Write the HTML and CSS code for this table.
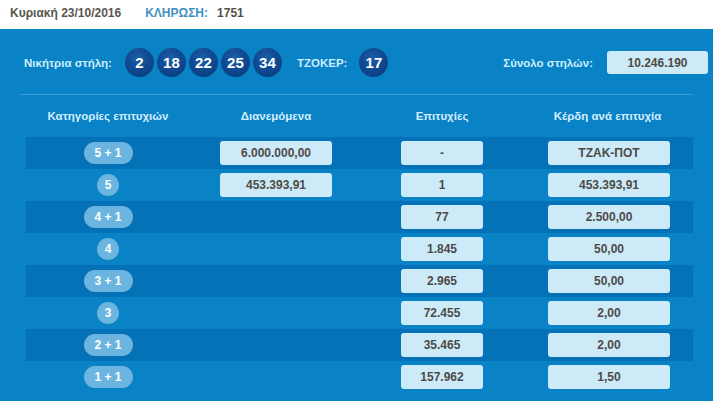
FILE: index.html
```html
<!DOCTYPE html>
<html lang="el">
<head>
<meta charset="utf-8">
<title>ΤΖΟΚΕΡ κλήρωση 1751</title>
<link rel="stylesheet" href="styles.css">
</head>
<body>
<div class="topbar">
  <span class="date">Κυριακή 23/10/2016</span>
  <span class="draw-label">ΚΛΗΡΩΣΗ:</span>
  <span class="draw-no">1751</span>
</div>
<div class="panel">
  <div class="numbers">
    <span class="lbl lbl-win">Νικήτρια στήλη:</span>
    <div class="balls">
      <span class="ball">2</span>
      <span class="ball">18</span>
      <span class="ball">22</span>
      <span class="ball">25</span>
      <span class="ball">34</span>
    </div>
    <span class="lbl lbl-joker">ΤΖΟΚΕΡ:</span>
    <span class="ball">17</span>
    <span class="lbl lbl-total">Σύνολο στηλών:</span>
    <span class="total-box">10.246.190</span>
  </div>
  <div class="table">
    <div class="row head">
      <div class="cell">Κατηγορίες επιτυχιών</div>
      <div class="cell">Διανεμόμενα</div>
      <div class="cell">Επιτυχίες</div>
      <div class="cell">Κέρδη ανά επιτυχία</div>
    </div>
    <div class="row dark">
      <div class="cell"><span class="pill">5 + 1</span></div>
      <div class="cell"><span class="box box-dist">6.000.000,00</span></div>
      <div class="cell"><span class="box box-succ">-</span></div>
      <div class="cell"><span class="box box-win">ΤΖΑΚ-ΠΟΤ</span></div>
    </div>
    <div class="row">
      <div class="cell"><span class="pill round">5</span></div>
      <div class="cell"><span class="box box-dist">453.393,91</span></div>
      <div class="cell"><span class="box box-succ">1</span></div>
      <div class="cell"><span class="box box-win">453.393,91</span></div>
    </div>
    <div class="row dark">
      <div class="cell"><span class="pill">4 + 1</span></div>
      <div class="cell"></div>
      <div class="cell"><span class="box box-succ">77</span></div>
      <div class="cell"><span class="box box-win">2.500,00</span></div>
    </div>
    <div class="row">
      <div class="cell"><span class="pill round">4</span></div>
      <div class="cell"></div>
      <div class="cell"><span class="box box-succ">1.845</span></div>
      <div class="cell"><span class="box box-win">50,00</span></div>
    </div>
    <div class="row dark">
      <div class="cell"><span class="pill">3 + 1</span></div>
      <div class="cell"></div>
      <div class="cell"><span class="box box-succ">2.965</span></div>
      <div class="cell"><span class="box box-win">50,00</span></div>
    </div>
    <div class="row">
      <div class="cell"><span class="pill round">3</span></div>
      <div class="cell"></div>
      <div class="cell"><span class="box box-succ">72.455</span></div>
      <div class="cell"><span class="box box-win">2,00</span></div>
    </div>
    <div class="row dark">
      <div class="cell"><span class="pill">2 + 1</span></div>
      <div class="cell"></div>
      <div class="cell"><span class="box box-succ">35.465</span></div>
      <div class="cell"><span class="box box-win">2,00</span></div>
    </div>
    <div class="row">
      <div class="cell"><span class="pill">1 + 1</span></div>
      <div class="cell"></div>
      <div class="cell"><span class="box box-succ">157.962</span></div>
      <div class="cell"><span class="box box-win">1,50</span></div>
    </div>
  </div>
</div>
</body>
</html>
```
FILE: styles.css
```css
html, body {
  margin: 0;
  padding: 0;
  background: #0a82c6;
  font-family: "Liberation Sans", Arial, sans-serif;
  font-size: 12px;
  font-weight: bold;
}
.topbar {
  background: #ffffff;
  height: 29px;
  display: flex;
  align-items: center;
  padding-left: 10px;
  padding-bottom: 4px;
  box-sizing: border-box;
  font-size: 12px;
}
.date {
  color: #5a5650;
}
.draw-label {
  color: #3f90c2;
  margin-left: 24px;
}
.draw-no {
  color: #555049;
  margin-left: 9px;
}
.panel {
  background: #0a82c6;
  height: 372px;
}
.numbers {
  height: 65px;
  box-sizing: border-box;
  padding: 2px 5px 0 24px;
  display: flex;
  align-items: center;
}
.lbl {
  color: #cdeeff;
  font-size: 11.5px;
}
.balls {
  display: flex;
  gap: 3px;
  margin-left: 13px;
}
.ball {
  width: 29px;
  height: 29px;
  border-radius: 50%;
  background: radial-gradient(circle at 45% 35%, #1c5ea8 0%, #0f4a93 45%, #0a3778 100%);
  color: #ffffff;
  font-size: 15px;
  display: flex;
  align-items: center;
  justify-content: center;
}
.lbl-joker {
  margin-left: 15px;
  margin-right: 12px;
}
.lbl-total {
  margin-left: auto;
  margin-right: 14px;
}
.total-box {
  width: 101px;
  height: 23px;
  background: #cdeaf9;
  border-radius: 3px;
  color: #4d4a46;
  display: flex;
  align-items: center;
  justify-content: center;
}
.table {
  margin: 0 20px;
  padding-left: 6px;
  border-top: 1px solid #3a9bd4;
}
.row {
  display: grid;
  grid-template-columns: 164px 172px 160px 171px;
  height: 32px;
  align-items: center;
}
.row.head {
  height: 42px;
  color: #d3eeff;
  font-size: 11.5px;
}
.row.dark {
  background: #0572b8;
}
.cell {
  display: flex;
  justify-content: center;
  align-items: center;
}
.pill {
  display: flex;
  align-items: center;
  justify-content: center;
  width: 49px;
  height: 22px;
  border-radius: 11px;
  background: #6cb5e0;
  color: #ffffff;
}
.pill.round {
  width: 22px;
}
.box {
  display: flex;
  align-items: center;
  justify-content: center;
  height: 24px;
  background: #cdeaf9;
  border-radius: 3px;
  color: #4d4a46;
}
.box-dist {
  width: 112px;
}
.box-succ {
  width: 82px;
}
.box-win {
  width: 122px;
  margin-left: 3px;
}
```
